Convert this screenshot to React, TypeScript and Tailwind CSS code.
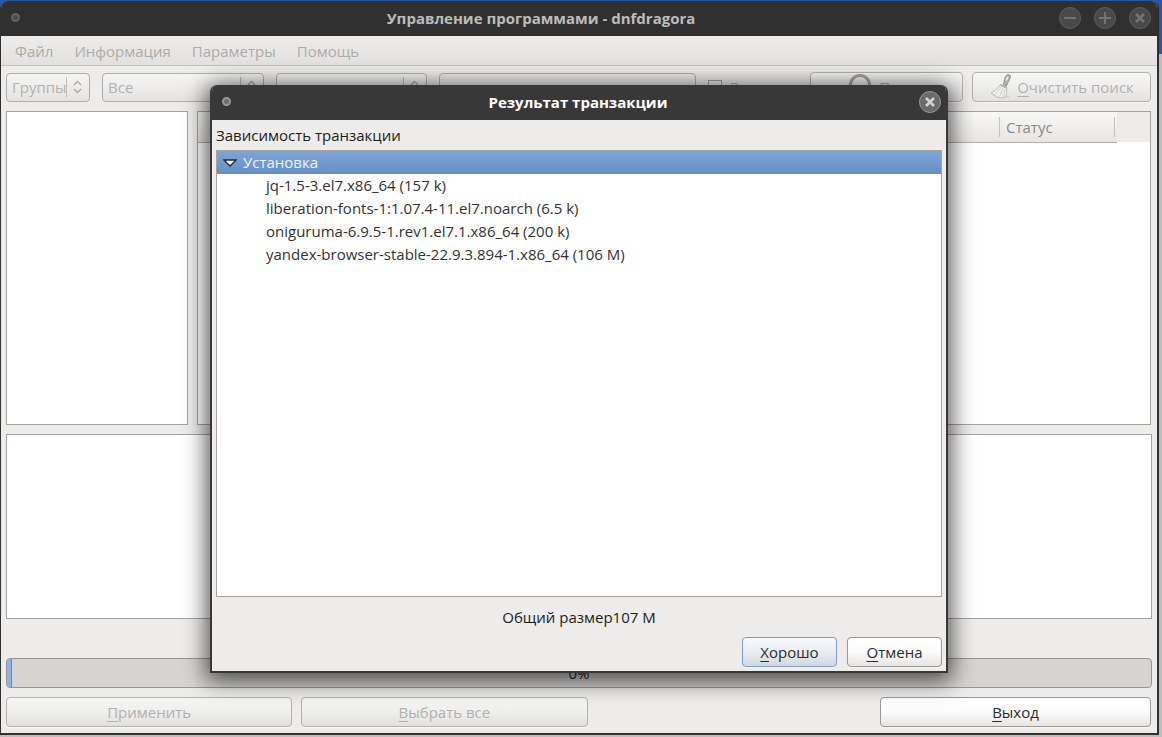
import type { ReactNode } from "react";
import clsx from "clsx";

const menuItems = ["Файл", "Информация", "Параметры", "Помощь"];

const packages = [
  "jq-1.5-3.el7.x86_64 (157 k)",
  "liberation-fonts-1:1.07.4-11.el7.noarch (6.5 k)",
  "oniguruma-6.9.5-1.rev1.el7.1.x86_64 (200 k)",
  "yandex-browser-stable-22.9.3.894-1.x86_64 (106 M)",
];

type ButtonTone = "disabled" | "normal" | "primary";

type ActionButtonProps = {
  label: string;
  tone?: ButtonTone;
  icon?: ReactNode;
  className?: string;
};

const toneClasses: Record<ButtonTone, string> = {
  disabled: "border-[#b4b2b0] bg-linear-to-b from-[#f6f6f5] via-[#eeeeed] to-[#e2e1df] text-[#b3b1af]",
  normal: "border-[#999693] bg-linear-to-b from-white via-[#fbfbfb] to-[#e6e5e4] text-[#2b2b2b]",
  primary: "border-[#7d9cc4] bg-linear-to-b from-[#f7fafd] via-[#e8edf3] to-[#d3d8de] text-[#2b2b2b] shadow-[0_0_0_1px_#a9c1e0]",
};

function ActionButton({ label, tone = "normal", icon, className }: ActionButtonProps) {
  return (
    <button
      type="button"
      disabled={tone === "disabled"}
      className={clsx(
        "flex h-[30px] items-center justify-center gap-[6px] rounded-[4px] border shadow-[0_1px_0_#f8f8f7]",
        toneClasses[tone],
        className,
      )}
    >
      {icon}
      <span>
        <span className="underline decoration-1 underline-offset-[3px] [text-decoration-skip-ink:none]">{label[0]}</span>
        {label.slice(1)}
      </span>
    </button>
  );
}

type ComboProps = { label: string; value: string; className?: string };

function Combo({ label, value, className }: ComboProps) {
  return (
    <div
      className={clsx(
        "flex h-[29px] items-center rounded-[4px] border border-[#b0aeac] bg-linear-to-b from-[#f5f5f4] to-[#e4e3e1] text-[#b3b1af]",
        className,
      )}
    >
      <select
        aria-label={label}
        disabled
        className="min-w-0 flex-1 appearance-none overflow-hidden bg-transparent pl-[5px] text-clip disabled:opacity-100"
      >
        <option>{value}</option>
      </select>
      <span className="h-5 w-px bg-[#bfbdbb]" />
      <svg viewBox="0 0 22 20" className="h-5 w-[22px] shrink-0" fill="none" stroke="#aaa8a6" strokeWidth="1.3">
        <path d="M7 8 L10.5 4.5 L14 8 M7 12 L10.5 15.5 L14 12" />
      </svg>
    </div>
  );
}

function WindowButton({ kind, active = false }: { kind: "minimize" | "maximize" | "close"; active?: boolean }) {
  const glyphs = {
    minimize: "M6 12 H18",
    maximize: "M6 12 H18 M12 6 V18",
    close: "M8 8 L16 16 M16 8 L8 16",
  };
  return (
    <button type="button" aria-label={kind} className="mb-[2px] h-6 w-6">
      <svg viewBox="0 0 24 24" className="h-6 w-6">
        <circle cx="12" cy="12" r="10.5" fill={active ? "#6b6b6b" : "#494949"} stroke={active ? "#979797" : "#5e5e5e"} />
        <path d={glyphs[kind]} fill="none" stroke={active ? "#d2d2d2" : "#737373"} strokeWidth={kind === "close" ? 2.6 : 2} />
      </svg>
    </button>
  );
}

function Dot({ active = false }: { active?: boolean }) {
  return (
    <span
      className={clsx(
        "mb-[2px] h-[9px] w-[9px] rounded-full border-2",
        active ? "border-[#989898] bg-[#6c6c6c]" : "border-[#636363] bg-[#4d4d4d]",
      )}
    />
  );
}

function BroomIcon() {
  return (
    <svg viewBox="0 0 22 26" className="h-[26px] w-[22px]" fill="none">
      <ellipse cx="14" cy="22.5" rx="7.5" ry="1.8" fill="#dad9d7" />
      <path d="M14.5 10.5 C15.5 7 15 3.5 18 .8 Q22 0 21.3 3.5 C20.5 6.5 18.5 8.5 17.5 12Z" fill="#b5b3b1" stroke="#8f8d8b" />
      <path d="M18.8 2.8 L17.3 6.5" stroke="#efeeed" strokeWidth="1.5" />
      <path d="M11.5 10.5 L18 13.5 L17 23 Q12 24.5 8 23 L2 19 Q8.5 16 11.5 10.5Z" fill="#f0efee" stroke="#c0bebc" />
      <path d="M12 13 L6.5 20.5 M14 14 L10.5 22.5 M16 15 L14.5 22.5" stroke="#c9c7c5" strokeWidth=".8" />
      <path d="M11.5 11 L17.7 14" stroke="#b1afad" strokeWidth="1.6" />
    </svg>
  );
}

function SearchIcon() {
  return (
    <svg viewBox="0 0 24 28" className="h-7 w-6" fill="none" stroke="#a3a19f">
      <circle cx="11" cy="12" r="9.5" strokeWidth="3" />
      <path d="M17 19 L22 25" strokeWidth="4" />
    </svg>
  );
}

function TransactionDialog() {
  return (
    <section
      role="dialog"
      aria-labelledby="dialog-title"
      className="flex w-full max-w-[738px] flex-col overflow-hidden rounded-t-[7px] border-x-2 border-b-2 border-[#383838] bg-[#edecea] shadow-[0_4px_22px_4px_rgba(0,0,0,0.65)]"
    >
      <header className="flex h-[35px] shrink-0 items-center bg-[#383838] pr-1 pl-[10px]">
        <div className="flex flex-1">
          <Dot active />
        </div>
        <h2 id="dialog-title" className="pr-2 font-bold text-white">
          Результат транзакции
        </h2>
        <div className="flex flex-1 justify-end">
          <WindowButton kind="close" active />
        </div>
      </header>
      <div className="flex flex-1 flex-col px-[4px] pb-1">
        <p className="py-[5px] leading-5">Зависимость транзакции</p>
        <ul className="flex-1 border border-[#a5a3a0] bg-white leading-[23px] text-[#333]">
          <li>
            <div className="flex items-center gap-[6px] bg-linear-to-b from-[#7fa5d8] to-[#658fc4] pl-[6px] text-[#eef4fc]">
              <svg viewBox="0 0 14 8" className="h-2 w-[14px]">
                <path d="M1 1 H13 L7 7Z" fill="#fff" stroke="#202a36" strokeWidth="1.3" />
              </svg>
              Установка
            </div>
            <ul className="pl-[49px]">
              {packages.map((name) => (
                <li key={name}>{name}</li>
              ))}
            </ul>
          </li>
        </ul>
        <p className="py-[10px] text-center leading-5">Общий размер107 M</p>
        <div className="flex justify-end gap-[10px]">
          <ActionButton label="Хорошо" tone="primary" className="w-[95px]" />
          <ActionButton label="Отмена" className="w-[95px]" />
        </div>
      </div>
    </section>
  );
}

function App() {
  return (
    <div className="min-h-screen bg-[linear-gradient(#2a55ae_54px,#bdbdbd_54px)] pt-px pr-[3px] pb-[2px] font-['Open_Sans','Noto_Sans',sans-serif] text-[15px] text-[#1c1c1c]">
      <main className="relative flex min-h-[calc(100vh-3px)] flex-col overflow-hidden rounded-t-[7px] border-r-2 border-b-2 border-l border-[#303030] bg-[#edecea]">
        <header className="flex h-[35px] items-center bg-[#303030] pr-[5px] pl-[10px]">
          <Dot />
          <h1 className="flex-1 pl-1 text-center font-bold text-[#bcbcbc]">Управление программами - dnfdragora</h1>
          <div className="flex gap-[11px]">
            <WindowButton kind="minimize" />
            <WindowButton kind="maximize" />
            <WindowButton kind="close" />
          </div>
        </header>

        <nav className="flex h-[30px] items-center gap-[21px] border-b border-[#c4c2c0] bg-linear-to-b from-[#edecea] to-[#e2e1df] px-[14px] pt-[2px] text-[#adaba9]">
          {menuItems.map((item) => (
            <button key={item} type="button" disabled>
              {item}
            </button>
          ))}
        </nav>

        <div className="flex items-center gap-3 pt-[6px] pr-[6px] pb-[9px] pl-[5px] text-[#b3b1af]">
          <Combo label="Вид" value="Группы" className="w-[84px]" />
          <Combo label="Фильтр" value="Все" className="w-[162px]" />
          <Combo label="Поле поиска" value="" className="w-[151px]" />
          <input
            aria-label="Строка поиска"
            disabled
            className="h-[29px] min-w-0 flex-1 rounded-[4px] border border-[#b0aeac] bg-[#edecea] px-2"
          />
          <label className="flex w-[90px] items-center gap-2">
            <input type="checkbox" disabled className="h-[14px] w-[14px] appearance-none border border-[#a3a19f] bg-[#efeeec]" />
            Регексп
          </label>
          <div className="flex gap-[9px]">
            <ActionButton label="Поиск" tone="disabled" icon={<SearchIcon />} className="w-[153px]" />
            <ActionButton label="Очистить поиск" tone="disabled" icon={<BroomIcon />} className="w-[179px]" />
          </div>
        </div>

        <div className="flex min-h-[200px] flex-1 gap-[9px] pr-[6px] pl-[5px]">
          <div className="w-[182px] border border-[#a5a3a0] bg-white" />
          <div className="flex-1 border border-[#a5a3a0] bg-white">
            <table className="w-full table-fixed text-left text-[#8b8987]">
              <thead>
                <tr className="h-[30px] bg-linear-to-b from-[#f8f8f7] to-[#e6e5e3]">
                  <th aria-label="Имя" className="border-b border-[#b0aeab]" />
                  <th className="w-[118px] border-b border-[#b0aeab] font-normal">
                    <div className="mr-[2px] border-x border-[#c6c4c2] px-[6px] leading-5">Статус</div>
                  </th>
                  <td className="w-[33px] bg-[#edecea]" />
                </tr>
              </thead>
            </table>
          </div>
        </div>

        <div className="mx-[5px] mt-[9px] h-[185px] border border-[#a5a3a0] bg-white" />

        <div
          role="progressbar"
          aria-label="Ход выполнения"
          aria-valuenow={0}
          className="relative mx-[5px] mt-[39px] flex h-[30px] items-center justify-center rounded-[4px] border border-[#989694] bg-[#d5d4d2]"
        >
          <span className="absolute inset-y-0 left-0 w-[5px] rounded-l-[3px] border-r border-[#6289bd] bg-[#90b3e2]" />
          0%
        </div>

        <div className="flex gap-[9px] pt-[9px] pr-[6px] pb-[6px] pl-[5px]">
          <ActionButton label="Применить" tone="disabled" className="w-1/4" />
          <ActionButton label="Выбрать все" tone="disabled" className="w-1/4" />
          <ActionButton label="Выход" className="ml-auto w-[271px]" />
        </div>

        <div className="absolute inset-0 flex justify-center pt-[84px] pb-[60px]">
          <TransactionDialog />
        </div>
      </main>
    </div>
  );
}

export default App;
